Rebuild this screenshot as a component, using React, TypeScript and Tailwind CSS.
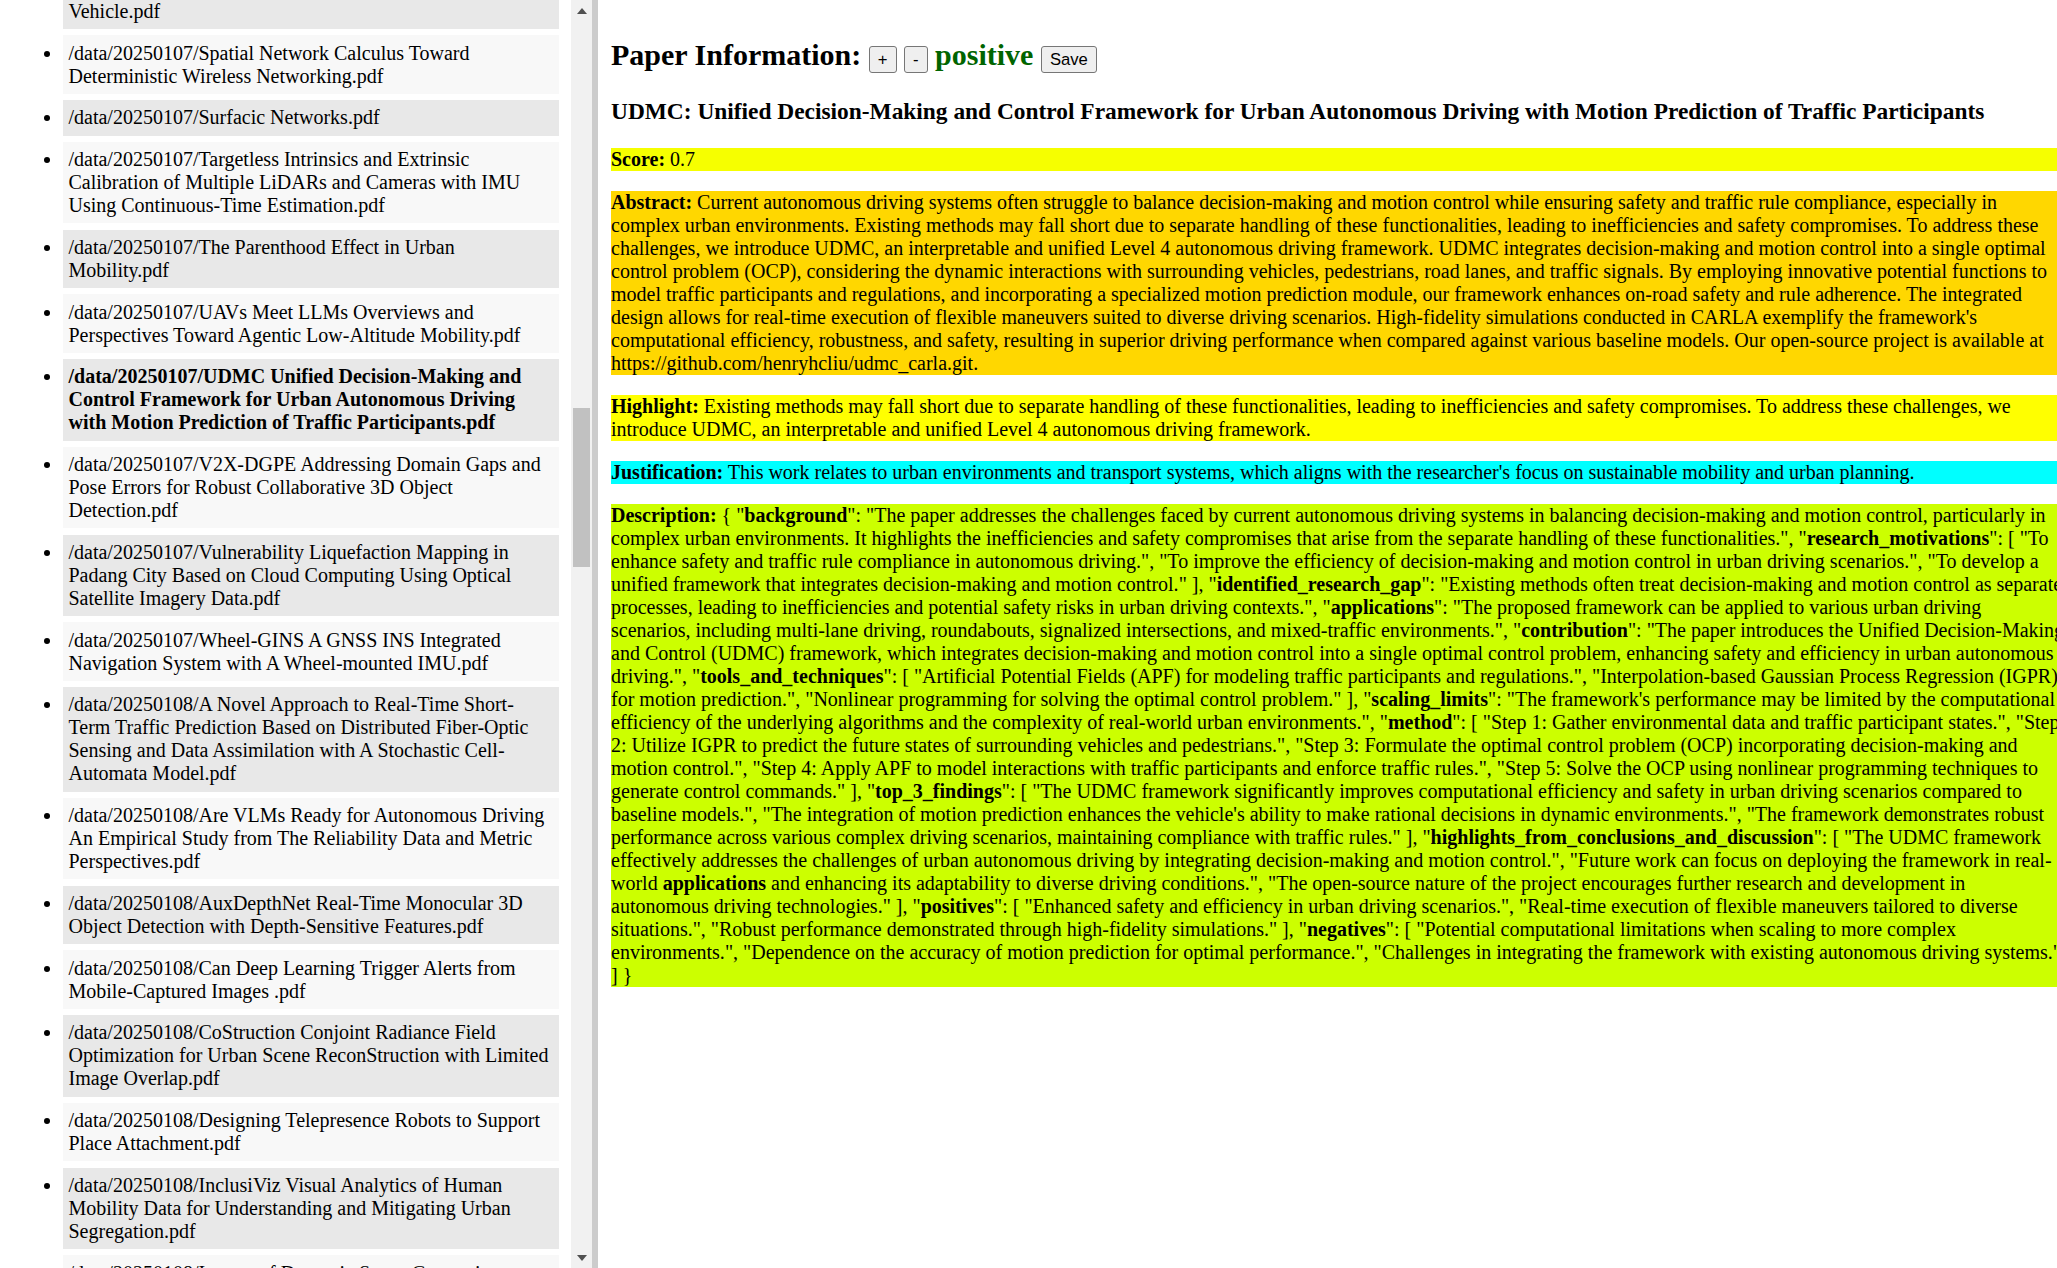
import React from 'react';

const files = [
  '/data/20250107/Spatial Network Calculus Toward Deterministic Wireless Networking.pdf',
  '/data/20250107/Surfacic Networks.pdf',
  '/data/20250107/Targetless Intrinsics and Extrinsic Calibration of Multiple LiDARs and Cameras with IMU Using Continuous-Time Estimation.pdf',
  '/data/20250107/The Parenthood Effect in Urban Mobility.pdf',
  '/data/20250107/UAVs Meet LLMs Overviews and Perspectives Toward Agentic Low-Altitude Mobility.pdf',
  '/data/20250107/UDMC Unified Decision-Making and Control Framework for Urban Autonomous Driving with Motion Prediction of Traffic Participants.pdf',
  '/data/20250107/V2X-DGPE Addressing Domain Gaps and Pose Errors for Robust Collaborative 3D Object Detection.pdf',
  '/data/20250107/Vulnerability Liquefaction Mapping in Padang City Based on Cloud Computing Using Optical Satellite Imagery Data.pdf',
  '/data/20250107/Wheel-GINS A GNSS INS Integrated Navigation System with A Wheel-mounted IMU.pdf',
  '/data/20250108/A Novel Approach to Real-Time Short-Term Traffic Prediction Based on Distributed Fiber-Optic Sensing and Data Assimilation with A Stochastic Cell-Automata Model.pdf',
  '/data/20250108/Are VLMs Ready for Autonomous Driving An Empirical Study from The Reliability Data and Metric Perspectives.pdf',
  '/data/20250108/AuxDepthNet Real-Time Monocular 3D Object Detection with Depth-Sensitive Features.pdf',
  '/data/20250108/Can Deep Learning Trigger Alerts from Mobile-Captured Images .pdf',
  '/data/20250108/CoStruction Conjoint Radiance Field Optimization for Urban Scene ReconStruction with Limited Image Overlap.pdf',
  '/data/20250108/Designing Telepresence Robots to Support Place Attachment.pdf',
  '/data/20250108/InclusiViz Visual Analytics of Human Mobility Data for Understanding and Mitigating Urban Segregation.pdf',
  '/data/20250108/Impact of Dynamic Scene Generation on Driving Policy Learning.pdf',
  '/data/20250108/Learning to Drive from Large-Scale Urban Street Imagery.pdf',
];

const selected = '/data/20250107/UDMC Unified Decision-Making and Control Framework for Urban Autonomous Driving with Motion Prediction of Traffic Participants.pdf';

const abstract =
  "Current autonomous driving systems often struggle to balance decision-making and motion control while ensuring safety and traffic rule compliance, especially in complex urban environments. Existing methods may fall short due to separate handling of these functionalities, leading to inefficiencies and safety compromises. To address these challenges, we introduce UDMC, an interpretable and unified Level 4 autonomous driving framework. UDMC integrates decision-making and motion control into a single optimal control problem (OCP), considering the dynamic interactions with surrounding vehicles, pedestrians, road lanes, and traffic signals. By employing innovative potential functions to model traffic participants and regulations, and incorporating a specialized motion prediction module, our framework enhances on-road safety and rule adherence. The integrated design allows for real-time execution of flexible maneuvers suited to diverse driving scenarios. High-fidelity simulations conducted in CARLA exemplify the framework's computational efficiency, robustness, and safety, resulting in superior driving performance when compared against various baseline models. Our open-source project is available at https://github.com/henryhcliu/udmc_carla.git.";

const highlight =
  'Existing methods may fall short due to separate handling of these functionalities, leading to inefficiencies and safety compromises. To address these challenges, we introduce UDMC, an interpretable and unified Level 4 autonomous driving framework.';

const justification =
  "This work relates to urban environments and transport systems, which aligns with the researcher's focus on sustainable mobility and urban planning.";

const description: [string, string | string[]][] = [
  ['background', 'The paper addresses the challenges faced by current autonomous driving systems in balancing decision-making and motion control, particularly in complex urban environments. It highlights the inefficiencies and safety compromises that arise from the separate handling of these functionalities.'],
  ['research_motivations', [
    'To enhance safety and traffic rule compliance in autonomous driving.',
    'To improve the efficiency of decision-making and motion control in urban driving scenarios.',
    'To develop a unified framework that integrates decision-making and motion control.',
  ]],
  ['identified_research_gap', 'Existing methods often treat decision-making and motion control as separate processes, leading to inefficiencies and potential safety risks in urban driving contexts.'],
  ['applications', 'The proposed framework can be applied to various urban driving scenarios, including multi-lane driving, roundabouts, signalized intersections, and mixed-traffic environments.'],
  ['contribution', 'The paper introduces the Unified Decision-Making and Control (UDMC) framework, which integrates decision-making and motion control into a single optimal control problem, enhancing safety and efficiency in urban autonomous driving.'],
  ['tools_and_techniques', [
    'Artificial Potential Fields (APF) for modeling traffic participants and regulations.',
    'Interpolation-based Gaussian Process Regression (IGPR) for motion prediction.',
    'Nonlinear programming for solving the optimal control problem.',
  ]],
  ['scaling_limits', "The framework's performance may be limited by the computational efficiency of the underlying algorithms and the complexity of real-world urban environments."],
  ['method', [
    'Step 1: Gather environmental data and traffic participant states.',
    'Step 2: Utilize IGPR to predict the future states of surrounding vehicles and pedestrians.',
    'Step 3: Formulate the optimal control problem (OCP) incorporating decision-making and motion control.',
    'Step 4: Apply APF to model interactions with traffic participants and enforce traffic rules.',
    'Step 5: Solve the OCP using nonlinear programming techniques to generate control commands.',
  ]],
  ['top_3_findings', [
    'The UDMC framework significantly improves computational efficiency and safety in urban driving scenarios compared to baseline models.',
    "The integration of motion prediction enhances the vehicle's ability to make rational decisions in dynamic environments.",
    'The framework demonstrates robust performance across various complex driving scenarios, maintaining compliance with traffic rules.',
  ]],
  ['highlights_from_conclusions_and_discussion', [
    'The UDMC framework effectively addresses the challenges of urban autonomous driving by integrating decision-making and motion control.',
    'Future work can focus on deploying the framework in real-world applications and enhancing its adaptability to diverse driving conditions.',
    'The open-source nature of the project encourages further research and development in autonomous driving technologies.',
  ]],
  ['positives', [
    'Enhanced safety and efficiency in urban driving scenarios.',
    'Real-time execution of flexible maneuvers tailored to diverse situations.',
    'Robust performance demonstrated through high-fidelity simulations.',
  ]],
  ['negatives', [
    'Potential computational limitations when scaling to more complex environments.',
    'Dependence on the accuracy of motion prediction for optimal performance.',
    'Challenges in integrating the framework with existing autonomous driving systems.',
  ]],
];

const keys = description.map(([k]) => k);
const keyRe = new RegExp(`\\b(${keys.join('|')})\\b`, 'g');

const Marked: React.FC<{ text: string }> = ({ text }) => (
  <>
    {text.split(keyRe).map((part, i) =>
      keys.includes(part) ? <b key={i}>{part}</b> : <React.Fragment key={i}>{part}</React.Fragment>
    )}
  </>
);

const Quoted: React.FC<{ text: string }> = ({ text }) => (
  <>
    {'"'}
    <Marked text={text} />
    {'"'}
  </>
);

const btn =
  "inline-block align-baseline border border-[#767676] bg-[#efefef] rounded-[3px] px-[8px] py-[2.5px] text-[16.67px] font-normal leading-[normal] font-['Liberation_Sans',Arial,sans-serif] text-black";

const ScrollBar: React.FC = () => (
  <div className="w-[21px] shrink-0 bg-[#f1f1f1] flex flex-col">
    <div className="h-[21px] flex items-center justify-center">
      <svg width="10" height="6" viewBox="0 0 10 6">
        <path d="M0 6 L5 0 L10 6 Z" fill="#505050" />
      </svg>
    </div>
    <div className="flex-1 px-[2px]">
      <div className="mt-[387px] h-[159px] bg-[#c1c1c1]" />
    </div>
    <div className="h-[21px] flex items-center justify-center">
      <svg width="10" height="6" viewBox="0 0 10 6">
        <path d="M0 0 L5 6 L10 0 Z" fill="#505050" />
      </svg>
    </div>
  </div>
);

export default function App() {
  return (
    <div className="flex h-screen w-screen overflow-hidden bg-white text-black text-[20px] leading-[normal] font-['Liberation_Serif','Times_New_Roman',serif]">
      {/* file list */}
      <div className="w-[571px] shrink-0 overflow-hidden px-[12.5px]">
        <ul className="list-disc pl-[50px] m-0">
          <li className="h-[29px] overflow-hidden flex flex-col justify-end bg-[#e8e8e8] px-[6px] pb-[6.25px] mb-[6.25px]">
            <span>/data/20250107/Safety Verification of an Autonomous Vehicle.pdf</span>
          </li>
          {files.map((f, i) => (
            <li
              key={f}
              className={`px-[6px] py-[6.25px] mb-[6.25px] ${i % 2 === 0 ? 'bg-[#f8f8f8]' : 'bg-[#e8e8e8]'} ${
                f === selected ? 'font-bold' : ''
              }`}
            >
              {f}
            </li>
          ))}
        </ul>
      </div>
      <ScrollBar />
      <div className="w-[6px] shrink-0 bg-[#cccccc]" />

      {/* paper details */}
      <div className="w-[1470px] shrink-0 pl-[13px] pt-[12.5px]">
        <div className="w-[1454px]">
          <h2 className="text-[30px] font-bold my-[25px]">
            Paper Information: <button className={btn}>+</button> <button className={btn}>-</button>{' '}
            <span className="text-[#006400]">positive</span> <button className={btn}>Save</button>
          </h2>
          <h3 className="text-[23.4px] font-bold my-[23.4px]">
            UDMC: Unified Decision-Making and Control Framework for Urban Autonomous Driving with Motion Prediction of Traffic Participants
          </h3>
          <p className="my-5 bg-[#f6ff00]">
            <b>Score:</b> 0.7
          </p>
          <p className="my-5 bg-[#ffd700]">
            <b>Abstract:</b> {abstract}
          </p>
          <p className="my-5 bg-[#ffff00]">
            <b>Highlight:</b> {highlight}
          </p>
          <p className="my-5 bg-[#00ffff]">
            <b>Justification:</b> {justification}
          </p>
          <p className="my-5 bg-[#ccff00]">
            <b>Description:</b> {'{ '}
            {description.map(([k, v], i) => (
              <React.Fragment key={k}>
                {'"'}
                <b>{k}</b>
                {'": '}
                {Array.isArray(v) ? (
                  <>
                    {'[ '}
                    {v.map((s, j) => (
                      <React.Fragment key={j}>
                        <Quoted text={s} />
                        {j < v.length - 1 ? ', ' : ' '}
                      </React.Fragment>
                    ))}
                    {']'}
                  </>
                ) : (
                  <Quoted text={v} />
                )}
                {i < description.length - 1 ? ', ' : ' '}
              </React.Fragment>
            ))}
            {'}'}
          </p>
        </div>
      </div>
    </div>
  );
}
